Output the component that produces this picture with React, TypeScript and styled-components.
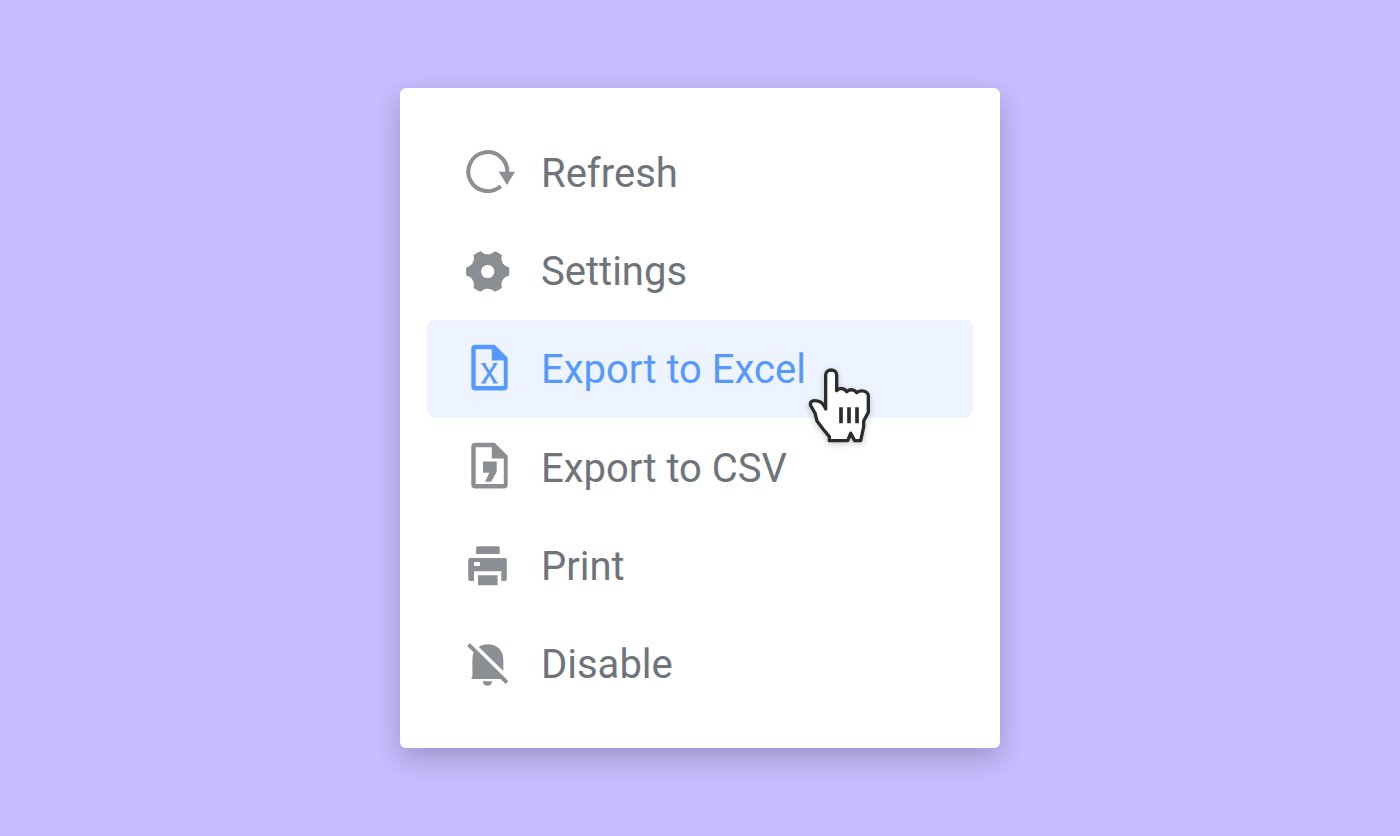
import React from 'react';
import styled, { createGlobalStyle } from 'styled-components';

const GlobalStyle = createGlobalStyle`
  *, *::before, *::after { box-sizing: border-box; }
  body {
    margin: 0;
    background: #c9bcff;
    font-family: Roboto, "Liberation Sans", sans-serif;
  }
`;

const Page = styled.main`
  min-height: 100vh;
  display: flex;
  align-items: center;
  justify-content: center;
`;

const Menu = styled.ul`
  list-style: none;
  margin: 0;
  width: 100%;
  max-width: 600px;
  min-height: 660px;
  padding: 35px 27px;
  display: flex;
  flex-direction: column;
  background: #fff;
  border-radius: 6px;
  box-shadow: 0 10px 28px rgba(0, 0, 0, 0.22);
`;

const Item = styled.li`
  position: relative;
  flex: 1;
  display: flex;
`;

const ItemButton = styled.button<{ $active?: boolean }>`
  flex: 1;
  display: flex;
  align-items: center;
  gap: 23px;
  padding: 0 31px;
  border: 0;
  border-radius: 8px;
  background: ${(p) => (p.$active ? '#edf4ff' : 'transparent')};
  color: ${(p) => (p.$active ? '#5599ff' : '#6e7479')};
  font: inherit;
  font-size: 40px;
  line-height: 48px;
  text-align: left;
  cursor: pointer;
`;

const Label = styled.span`
  padding-top: 3px;
`;

const Icon = styled.svg<{ $active?: boolean }>`
  flex: none;
  width: 60px;
  height: 60px;
  color: ${(p) => (p.$active ? '#5599ff' : '#8b8f94')};
`;

const Pointer = styled.svg`
  position: absolute;
  left: 368px;
  top: 35px;
  z-index: 1;
  width: 90px;
  height: 100px;
  pointer-events: none;
  filter: drop-shadow(0 2px 3px rgba(0, 0, 0, 0.2));
`;

const RefreshIcon = (
  <>
    <path d="M42.7 44.3A19.5 19.5 0 1 1 49.3 30.3" fill="none" stroke="currentColor" strokeWidth="4" />
    <path d="M40.7 29.8H57L49 42.9Z" fill="currentColor" />
  </>
);

const GearIcon = (
  <path
    transform="translate(29.7 31.5)"
    fill="currentColor"
    fillRule="evenodd"
    d="M7 -20.3Q10.8 -19.4 14.2 -16.2C12.6 -10.5 15.6 -5.4 21.2 -4.2Q22.2 0 21.2 4.2C15.6 5.4 12.6 10.5 14.2 16.2Q10.8 19.4 7 20.3C3 16.2 -3 16.2 -7 20.3Q-10.8 19.4 -14.2 16.2C-12.6 10.5 -15.6 5.4 -21.2 4.2Q-22.2 0 -21.2 -4.2C-15.6 -5.4 -12.6 -10.5 -14.2 -16.2Q-10.8 -19.4 -7 -20.3C-3 -16.2 3 -16.2 7 -20.3ZM6.6 0A6.6 6.6 0 1 0 -6.6 0A6.6 6.6 0 1 0 6.6 0Z"
  />
);

const Sheet = (
  <path
    fill="currentColor"
    fillRule="evenodd"
    d="M17.3 5.8H36.6L49.7 18.8V47.4A4 4 0 0 1 45.7 51.4H17.3A4 4 0 0 1 13.3 47.4V9.8A4 4 0 0 1 17.3 5.8ZM17.7 10.2V47H45.8V21.4H33.8V10.2Z"
  />
);

const ExcelIcon = (
  <>
    {Sheet}
    <path
      d="M25.3 24.8L37.7 43.8M37.7 24.8L25.3 43.8"
      fill="none"
      stroke="currentColor"
      strokeWidth="3"
    />
    <path
      d="M23.3 24.8H28M35 24.8H39.3M23.3 43.8H28M35 43.8H39.6"
      fill="none"
      stroke="currentColor"
      strokeWidth="1.6"
    />
  </>
);

const CsvIcon = (
  <>
    {Sheet}
    <path d="M25 24.4H38.7V34.8L33.2 44.8H27L31.4 35.8H25Z" fill="currentColor" />
  </>
);

const PrintIcon = (
  <path
    transform="translate(0 0.5)"
    fill="currentColor"
    fillRule="evenodd"
    d="M19.6 10.8H40.2A1.5 1.5 0 0 1 41.7 12.3V18.6H18.1V12.3A1.5 1.5 0 0 1 19.6 10.8ZM12.2 22.6H46.8A2 2 0 0 1 48.8 24.6V43.4A2 2 0 0 1 46.8 45.4H43.3V35.8H16V45.4H12.2A2 2 0 0 1 10.2 43.4V24.6A2 2 0 0 1 12.2 22.6ZM16 26.5V30.5H22V26.5ZM20 39.8H39.6V49.8H20Z"
  />
);

const BellOffIcon = (
  <>
    <path
      d="M20.8 12.9C23 11.1 26 10.2 29.8 10.2C39 10.2 45.3 16.2 45.3 25.7V37Z"
      fill="currentColor"
    />
    <path
      d="M16.4 16.4L45 44.9H13.6V43.4L14.4 42V25.7Q14.3 20.4 16.4 16.4Z"
      fill="currentColor"
    />
    <path d="M10.6 10.6L49 48.7" stroke="currentColor" strokeWidth="4" />
    <path d="M24.7 47.2H34.3Q33.4 51.8 29.5 51.8T24.7 47.2Z" fill="currentColor" />
  </>
);

type Entry = { label: string; icon: React.ReactNode; active?: boolean };

const entries: Entry[] = [
  { label: 'Refresh', icon: RefreshIcon },
  { label: 'Settings', icon: GearIcon },
  { label: 'Export to Excel', icon: ExcelIcon, active: true },
  { label: 'Export to CSV', icon: CsvIcon },
  { label: 'Print', icon: PrintIcon },
  { label: 'Disable', icon: BellOffIcon },
];

function HandPointer() {
  return (
    <Pointer viewBox="0 0 270 300" aria-hidden="true">
      <path
        d="M92 162V60C92 40 125 40 125 60V107C132 98 148 98 155 110C164 102 178 102 185 113C198 103 220 108 220 124V172L206 198V216L197 257H179L167 235L158 257H103V245L84 222L66 198L60 174L47 152C42 135 62 134 76 141C84 145 88 152 92 162Z"
        fill="#fff"
        stroke="#2a2c2e"
        strokeWidth="10"
        strokeLinejoin="round"
      />
      <path d="M138 157V205M162 157V205M186 157V205" stroke="#2a2c2e" strokeWidth="11" />
    </Pointer>
  );
}

export default function App() {
  return (
    <Page>
      <GlobalStyle />
      <Menu>
        {entries.map(({ label, icon, active }) => (
          <Item key={label}>
            <ItemButton type="button" $active={active}>
              <Icon viewBox="0 0 60 60" $active={active} aria-hidden="true">
                {icon}
              </Icon>
              <Label>{label}</Label>
            </ItemButton>
            {active && <HandPointer />}
          </Item>
        ))}
      </Menu>
    </Page>
  );
}
